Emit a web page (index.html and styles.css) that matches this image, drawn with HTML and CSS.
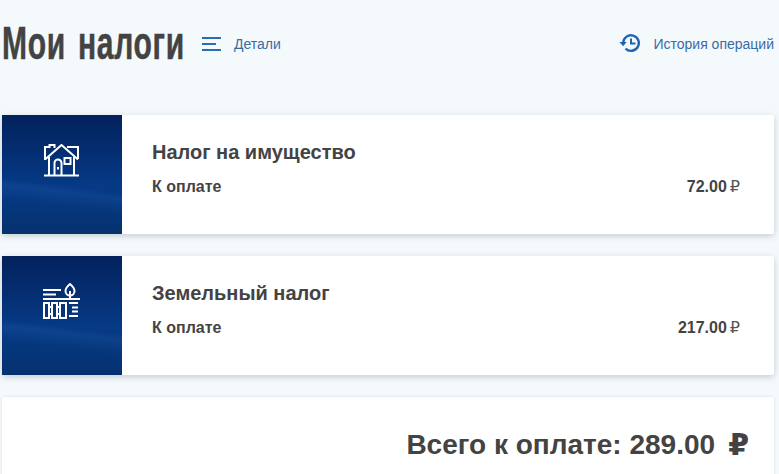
FILE: index.html
```html
<!DOCTYPE html>
<html lang="ru">
<head>
<meta charset="utf-8">
<title>Мои налоги</title>
<link rel="stylesheet" href="styles.css">
</head>
<body>
<div class="page">
  <header class="head">
    <div class="head-left">
      <h1 class="title"><span class="title-text">Мои налоги</span></h1>
      <a class="link link-details">
        <svg class="ico-menu" width="20" height="14" viewBox="0 0 20 14"><path d="M0 1h19M0 7h14M0 13h19" fill="none" stroke="#2a6db0" stroke-width="2"/></svg>
        <span>Детали</span>
      </a>
    </div>
    <a class="link link-history">
      <svg class="ico-hist" width="22" height="20" viewBox="0 0 22 20"><path d="M4.2 10a7.8 7.8 0 1 1 2.4 5.7" fill="none" stroke="#1f66ad" stroke-width="2.4"/><path d="M0.5 9h7.2l-3.6 4.2z" fill="#1f66ad"/><path d="M12 5.5v5h4.5" fill="none" stroke="#1f66ad" stroke-width="2"/></svg>
      <span>История операций</span>
    </a>
  </header>

  <section class="card">
    <div class="thumb">
      <svg width="36" height="33" viewBox="0 0 36 33" fill="none" stroke="#fff" stroke-width="2">
        <path d="M1 16V3H5.500V1H10.500V4"/>
        <path d="M1 15.500L17.500 1L34 15.500"/>
        <path d="M23 3H34V15"/>
        <path d="M5 13V31M30 13V31M0 31.500H35"/>
        <path d="M10.500 31V19a3.500 3.500 0 0 1 7 0V31"/>
        <rect x="20.500" y="14" width="6" height="6"/>
        <path d="M14 23v2.500"/>
      </svg>
    </div>
    <div class="body">
      <h2 class="name">Налог на имущество</h2>
      <div class="row"><span>К оплате</span><span class="sum">72.00<span class="rub">₽</span></span></div>
    </div>
  </section>

  <section class="card">
    <div class="thumb">
      <svg width="38" height="36" viewBox="0 0 38 36" fill="none" stroke="#fff" stroke-width="2">
        <path d="M0 7h18M0 11.500h13M0 16h37"/>
        <path d="M27 1c3 2.500 4.500 5 4.500 7a4.500 4.500 0 0 1-9 0c0-2 1.500-4.500 4.500-7zM27 8v8"/>
        <path d="M1 20h5v15H1zM6 24h3M6 31h3M9 20h5v15H9zM14 24h3M14 31h3M17 20h6v15h-6z"/>
        <path d="M26 20h9M29 24.500h6M29 28.500h6M26 33h9"/>
      </svg>
    </div>
    <div class="body">
      <h2 class="name">Земельный налог</h2>
      <div class="row"><span>К оплате</span><span class="sum">217.00<span class="rub">₽</span></span></div>
    </div>
  </section>

  <section class="total">
    <span>Всего к оплате: 289.00</span><span class="total-rub">₽</span>
  </section>
</div>
</body>
</html>
```

FILE: styles.css
```css
* { box-sizing: border-box; }
html, body { margin: 0; height: 100%; overflow: hidden; }
body {
  background: #f4f9fc;
  font-family: "Liberation Sans", Arial, sans-serif;
  color: #444343;
}
.page { padding: 0 5px 0 2px; }
.head {
  height: 115px;
  display: flex;
  justify-content: space-between;
  align-items: flex-start;
  padding-top: 17px;
}
.head-left { display: flex; align-items: center; }
.title {
  margin: 0;
  width: 183px;
  font-size: 47px;
  line-height: 52px;
  font-weight: 700;
  color: #444343;
  white-space: nowrap;
}
.title-text {
  display: inline-block;
  transform: scaleX(.64);
  transform-origin: left center;
  letter-spacing: 1px;
  word-spacing: 5px;
  -webkit-text-stroke: .5px #444343;
}
.link {
  display: flex;
  align-items: center;
  font-family: "Liberation Sans", Arial, sans-serif;
  font-size: 14px;
  color: #3a6ba5;
}
.link-details { margin: 2px 0 0 17px; gap: 12px; }
.link-history { margin-top: 18px; gap: 12px; margin-right: 0; }
.ico-hist { margin-top: -2px; }
.card {
  display: flex;
  height: 119px;
  margin-bottom: 22px;
  background: #fff;
  box-shadow: 0 2px 6px rgba(60, 70, 80, .25);
  border-radius: 2px;
}
.thumb {
  flex: none;
  width: 120px;
  display: flex;
  align-items: center;
  justify-content: center;
  padding: 0 0 29px;
  background:
    linear-gradient(187deg, transparent 58%, rgba(70, 130, 210, .12) 63%, transparent 74%),
    linear-gradient(180deg, #03215c 0%, #063a86 60%, #05316f 100%);
}
.body { flex: 1; padding: 25px 34px 0 30px; }
.name {
  margin: 0 0 14px;
  font-size: 20px;
  line-height: 24px;
  font-weight: 700;
}
.row {
  display: flex;
  justify-content: space-between;
  font-size: 16px;
  line-height: 18px;
  font-weight: 700;
}
.sum { display: flex; align-items: baseline; gap: 3px; white-space: nowrap; }
.rub { font-family: "DejaVu Sans", sans-serif; font-size: 16px; font-weight: 400; color: #555; }
.total {
  display: flex;
  justify-content: flex-end;
  align-items: center;
  height: 100px;
  padding: 0 25px 4px 0;
  gap: 13px;
  background: #fff;
  border-radius: 3px;
  box-shadow: 0 0 3px rgba(60, 70, 80, .15);
  font-size: 28px;
  font-weight: 700;
}
.total-rub { font-family: "DejaVu Sans", sans-serif; font-size: 30px; line-height: 32px; font-weight: 700; }
```
